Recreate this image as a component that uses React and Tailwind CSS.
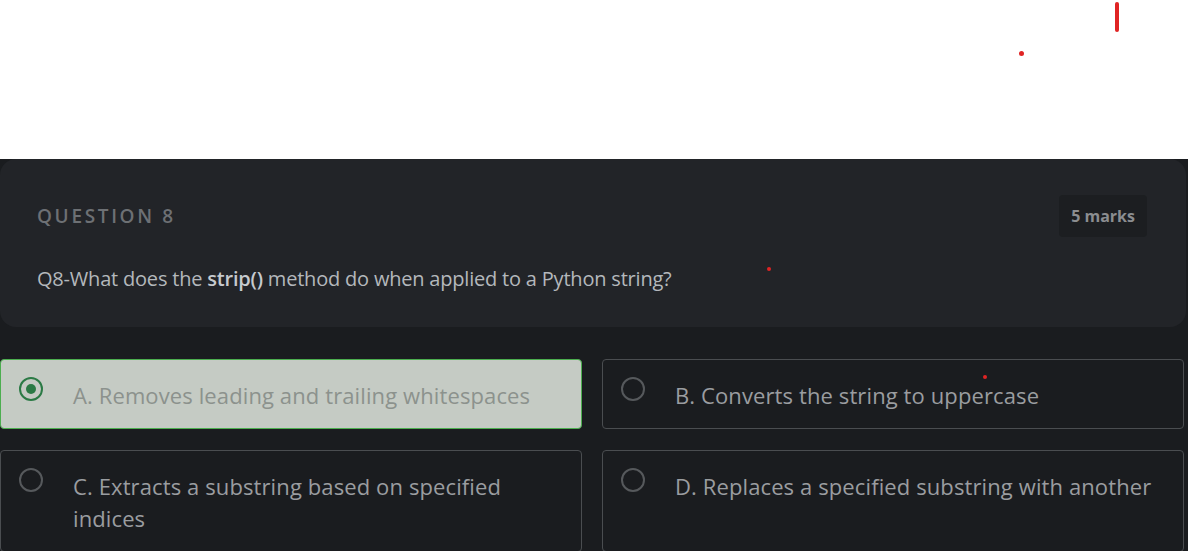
import { useState } from "react";

const OPTIONS = [
  { id: "A", text: "A. Removes leading and trailing whitespaces" },
  { id: "B", text: "B. Converts the string to uppercase" },
  { id: "C", text: "C. Extracts a substring based on specified indices" },
  { id: "D", text: "D. Replaces a specified substring with another" },
];

function Radio({ checked }) {
  return checked ? (
    <span className="mt-[-2px] flex h-[24px] w-[24px] shrink-0 items-center justify-center rounded-full border-2 border-[#2b7a45]">
      <span className="h-[10px] w-[10px] rounded-full bg-[#2b7a45]" />
    </span>
  ) : (
    <span className="mt-[-2px] h-[24px] w-[24px] shrink-0 rounded-full border-2 border-[#56595c]" />
  );
}

export default function App() {
  const [selected, setSelected] = useState("A");

  return (
    <div className="min-h-[551px] bg-[#1a1c1f]" style={{ fontFamily: "'Open Sans', 'Noto Sans', sans-serif" }}>
      <div className="relative h-[159px] bg-white">
        <span className="absolute left-[1115px] top-[2px] h-[30px] w-[4px] rounded-full bg-[#e02424]" />
        <span className="absolute left-[1019px] top-[51px] h-[5px] w-[5px] rounded-full bg-[#e02424]" />
      </div>

      <div className="w-[1186px]">
        <div className="relative rounded-[16px] bg-[#222428] pb-[30px] pl-[37px] pr-[39px] pt-[36px]">
          <span className="absolute left-[767px] top-[108px] h-[4px] w-[4px] rounded-full bg-[#e02424]" />
          <div className="flex h-[42px] items-center justify-between">
            <span className="text-[19px] font-semibold tracking-[0.14em] text-[#6d7074]">QUESTION 8</span>
            <span className="flex h-[42px] items-center rounded-[4px] bg-[#1c1e21] px-[12px] text-[16px] font-bold text-[#8b8d90]">
              5 marks
            </span>
          </div>
          <p className="mt-[24px] text-[20px] leading-[36px] tracking-[-0.01em] text-[#b4b8bc]">
            Q8-What does the <span className="font-semibold text-[#c6cace]">strip()</span> method do when applied to a Python string?
          </p>
        </div>

        <div className="relative mt-[32px] grid grid-cols-2 gap-x-[20px] gap-y-[21px] pr-[2px]">
          <span className="absolute left-[983px] top-[16px] z-10 h-[4px] w-[4px] rounded-full bg-[#e02424]" />
          {OPTIONS.map((o) => {
            const active = selected === o.id;
            return (
              <button
                key={o.id}
                onClick={() => setSelected(o.id)}
                className={
                  active
                    ? "flex items-start gap-[30px] rounded-[4px] border border-[#4cae4f] bg-[#c5cbc4] pb-[17px] pl-[18px] pr-[30px] pt-[19px] text-left text-[22px] leading-[32px] tracking-[0.005em] text-[#8c928d]"
                    : "flex items-start gap-[30px] rounded-[4px] border border-[#4a4d50] bg-[#1a1c1f] pb-[17px] pl-[18px] pr-[30px] pt-[19px] text-left text-[22px] leading-[32px] tracking-[0.005em] text-[#9a9da0]"
                }
              >
                <Radio checked={active} />
                <span>{o.text}</span>
              </button>
            );
          })}
        </div>
      </div>
    </div>
  );
}
